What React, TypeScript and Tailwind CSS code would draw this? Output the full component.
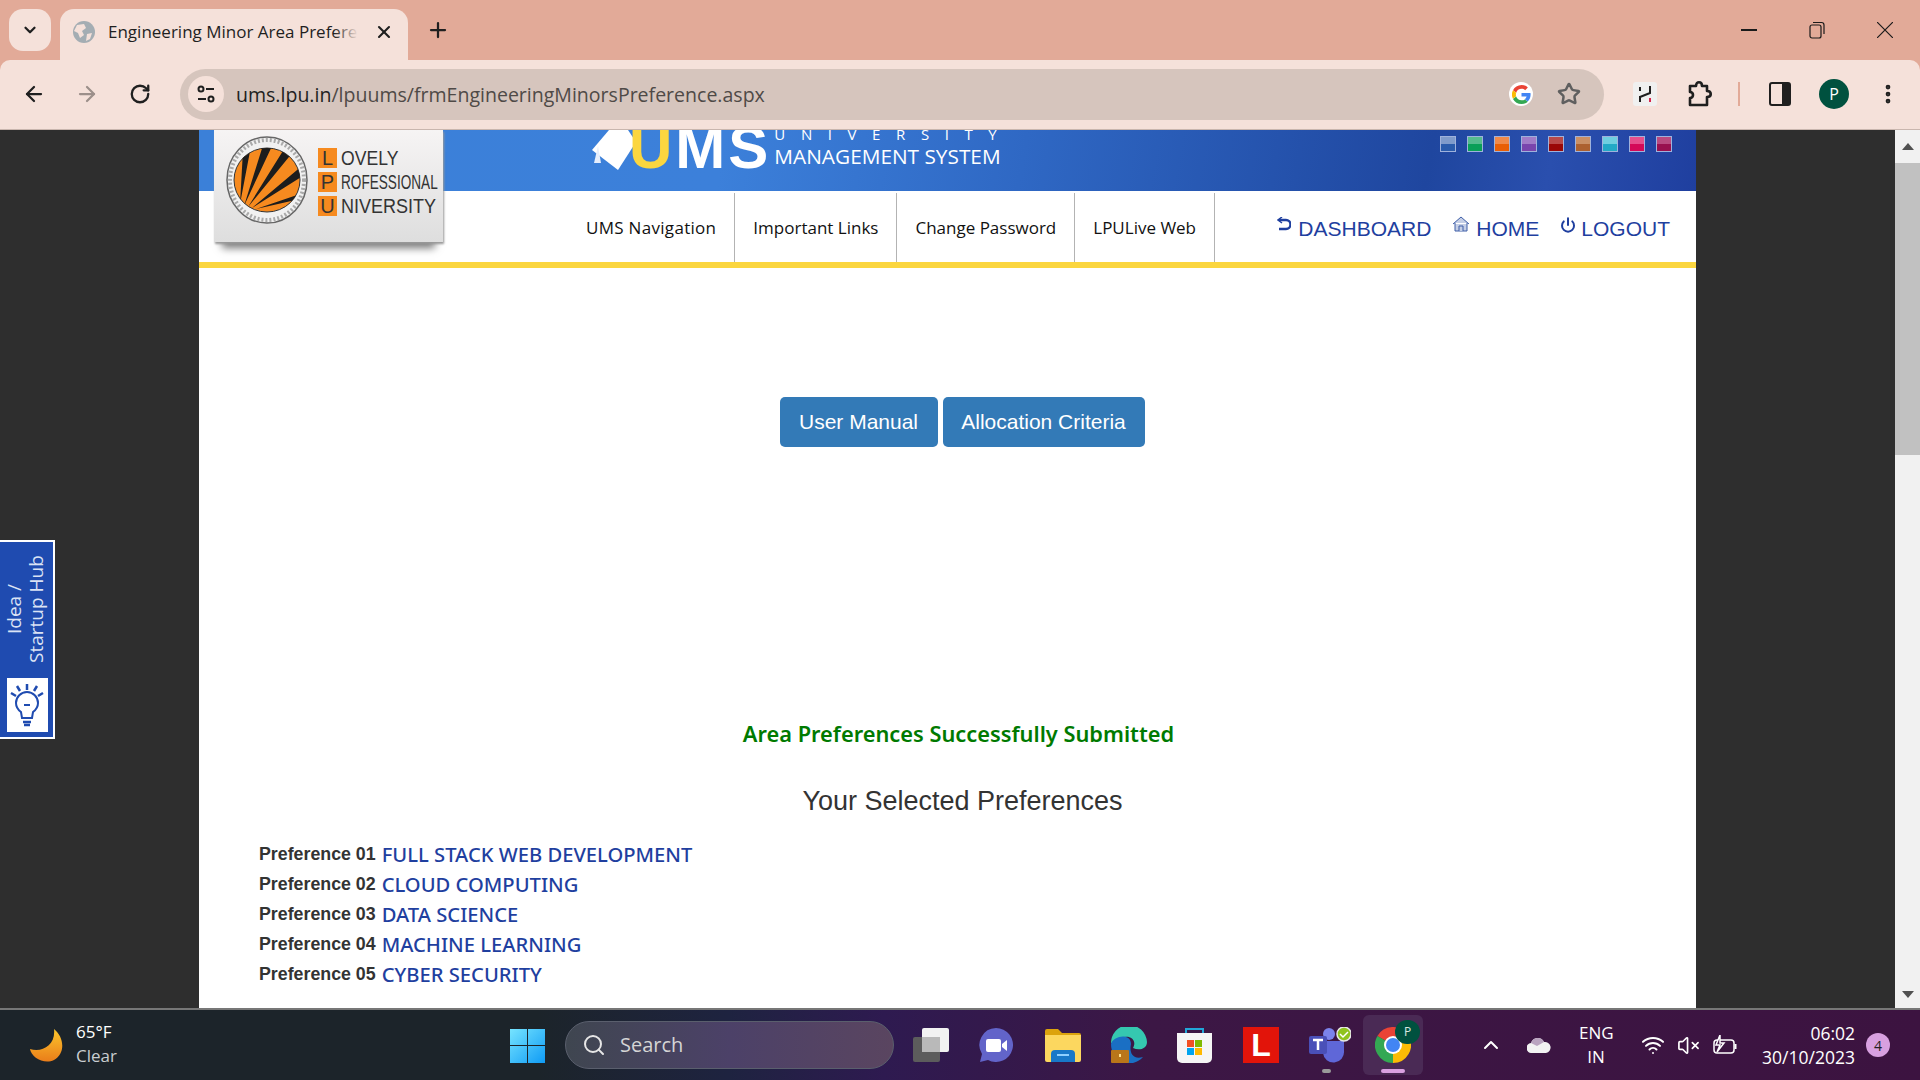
import React, { FC } from "react";
import {
  ArrowLeft,
  ArrowRight,
  ChevronDown,
  ChevronUp,
  EllipsisVertical,
  Plus,
  Power,
  RotateCw,
  Search,
  Star,
  VolumeX,
  Wifi,
  X,
} from "lucide-react";

const swatches = [
  "from-[#7f9bcb] to-[#2a5bab]",
  "from-[#55bb8e] to-[#0a9f58]",
  "from-[#f08a4a] to-[#e95f06]",
  "from-[#a27cc8] to-[#7a45ad]",
  "from-[#b84a4a] to-[#9a0808]",
  "from-[#c99066] to-[#ac6130]",
  "from-[#6fcfe0] to-[#22a9c6]",
  "from-[#e64f8c] to-[#d40a58]",
  "from-[#b84a80] to-[#98104f]",
];

const prefs = [
  ["Preference 01", "FULL STACK WEB DEVELOPMENT"],
  ["Preference 02", "CLOUD COMPUTING"],
  ["Preference 03", "DATA SCIENCE"],
  ["Preference 04", "MACHINE LEARNING"],
  ["Preference 05", "CYBER SECURITY"],
];

const navItems = [
  ["UMS Navigation", "tracking-[0.3px]"],
  ["Important Links", ""],
  ["Change Password", ""],
  ["LPULive Web", ""],
];

const Emblem: FC = () => (
  <svg width="82" height="88" viewBox="0 0 82 88" className="shrink-0">
    <defs>
      <clipPath id="disc">
        <ellipse cx="41" cy="44" rx="33" ry="32" />
      </clipPath>
    </defs>
    <ellipse cx="41" cy="44" rx="40" ry="43" fill="#f1f1f1" stroke="#666" strokeWidth="1.5" />
    <ellipse cx="41" cy="44" rx="37" ry="40" fill="none" stroke="#aaa" strokeWidth="4" strokeDasharray="2 2" />
    <ellipse cx="41" cy="44" rx="33" ry="32" fill="#f68a1f" stroke="#333" strokeWidth="1" />
    <g clipPath="url(#disc)">
      <path d="M14 68 L17 14 L25 10 Z M18 70 L38 6 L47 8 Z M22 71 L60 10 L67 16 Z M26 72 L78 28 L80 38 Z M30 73 L80 56 L78 62 Z" fill="#1d1d1d" />
    </g>
  </svg>
);

const Logo: FC = () => (
  <div className="absolute left-[15px] top-0 z-10 flex h-[112px] w-[229px] items-start bg-gradient-to-b from-[#f6f4f4] to-[#dedede] pl-[12px] pt-[6px] shadow-[1px_2px_2px_#999,0_14px_8px_-8px_#777]">
    <Emblem />
    <div className="ml-[10px] mt-[12px] flex flex-col gap-[4px] font-['Liberation_Sans',sans-serif] text-[20px] leading-[20px] text-[#333]">
      {[
        ["L", "OVELY", "scale-x-[0.88]"],
        ["P", "ROFESSIONAL", "scale-x-[0.68]"],
        ["U", "NIVERSITY", "scale-x-[0.9]"],
      ].map(([a, b, c]) => (
        <div key={a} className="flex">
          <span className="flex h-[20px] w-[19px] shrink-0 items-center justify-center bg-[#f68a1f]">{a}</span>
          <span className={`ml-[4px] origin-left whitespace-nowrap ${c}`}>{b}</span>
        </div>
      ))}
    </div>
  </div>
);

const UmsMark: FC = () => (
  <div className="absolute left-[393px] top-0 flex h-[61px] items-start overflow-hidden">
    <svg width="45" height="40" viewBox="0 0 45 40" className="mt-0 shrink-0">
      <path d="M17 0 L0 20 L26 40 L44 12 L36 0 Z" fill="#fff" />
      <path d="M6 16 L2 33 L9 33 Z" fill="#e6eefc" />
    </svg>
    <div className="-mt-[16px] ml-[-8px] flex font-['Liberation_Sans',sans-serif] text-[60px] font-bold leading-[68px] tracking-[3px]">
      <span className="text-[#fbd63f]">U</span>
      <span className="text-white">MS</span>
    </div>
    <div className="ml-[3px] font-['Open_Sans',sans-serif] text-white">
      <div className="-mt-[3px] text-[15px] leading-[15px] tracking-[15.6px]">UNIVERSITY</div>
      <div className="mt-[4px] whitespace-nowrap text-[20.8px] leading-[20px]">MANAGEMENT SYSTEM</div>
    </div>
  </div>
);

const GoogleG: FC = () => (
  <div className="flex h-[24px] w-[24px] items-center justify-center rounded-full bg-white">
    <svg width="19" height="19" viewBox="0 0 48 48">
      <path fill="#EA4335" d="M24 9.5c3.5 0 6.7 1.2 9.2 3.6l6.9-6.9C35.9 2.4 30.5 0 24 0 14.6 0 6.5 5.4 2.6 13.2l8 6.2C12.4 13.7 17.7 9.5 24 9.5z" />
      <path fill="#4285F4" d="M47 24.5c0-1.6-.1-3.1-.4-4.5H24v9h12.9c-.6 3-2.2 5.5-4.7 7.2l7.3 5.7C43.7 37.8 47 31.7 47 24.5z" />
      <path fill="#FBBC05" d="M10.5 28.6A14.5 14.5 0 0 1 10.5 19.4l-8-6.2a24 24 0 0 0 0 21.6l8-6.2z" />
      <path fill="#34A853" d="M24 48c6.5 0 11.9-2.1 15.9-5.8l-7.3-5.7c-2.2 1.5-5 2.3-8.6 2.3-6.3 0-11.6-4.2-13.5-9.9l-8 6.2C6.5 42.6 14.6 48 24 48z" />
    </svg>
  </div>
);

const ChromeTop: FC = () => (
  <div className="flex h-[60px] items-start bg-[#e2aa98]">
    <div className="ml-[9px] mt-[9px] flex h-[42px] w-[42px] items-center justify-center rounded-[14px] bg-[#f5e1da]">
      <ChevronDown size={18} strokeWidth={3} className="text-[#1f1f1f]" />
    </div>
    <div className="ml-[9px] mt-[9px] flex h-[51px] w-[348px] items-center rounded-t-[14px] bg-[#f5e1da] pb-[6px] pl-[13px]">
      <svg width="22" height="22" viewBox="0 0 22 22" className="shrink-0">
        <circle cx="11" cy="11" r="11" fill="#a4adb3" />
        <path d="M4 4 L11 3 L13 7 L9 10 L11 14 L7 17 L5 12 L1 10 Z M14 13 L19 12 L17 18 L13 20 Z" fill="#f5e1da" />
      </svg>
      <div className="relative ml-[13px] w-[250px] overflow-hidden whitespace-nowrap font-['Open_Sans',sans-serif] text-[17px] text-[#1f1f1f]">
        Engineering Minor Area Preferences
        <div className="absolute inset-y-0 right-0 w-[24px] bg-gradient-to-r from-transparent to-[#f5e1da]" />
      </div>
      <X size={20} strokeWidth={2.5} className="ml-[16px] shrink-0 text-[#1f1f1f]" />
    </div>
    <Plus size={24} strokeWidth={2.25} className="ml-[18px] mt-[18px] text-[#1f1f1f]" />
    <div className="ml-auto mr-[27px] mt-[19px] flex h-[22px] items-center">
      <div className="h-[1.5px] w-[16px] bg-[#1a1a1a]" />
      <svg width="16" height="18" viewBox="0 0 16 18" fill="none" stroke="#1a1a1a" strokeWidth="1.2" className="ml-[52px]">
        <rect x="1" y="4" width="11" height="13" rx="2" />
        <path d="M4 1.5 H12.5 A2.5 2.5 0 0 1 15 4 V13" />
      </svg>
      <svg width="16" height="16" viewBox="0 0 16 16" stroke="#1a1a1a" strokeWidth="1.2" className="ml-[52px]">
        <path d="M0 0 L16 16 M16 0 L0 16" />
      </svg>
    </div>
  </div>
);

const ChromeBar: FC = () => (
  <div className="flex h-[70px] items-center border-b border-[#c9b6ae] bg-[#e2aa98]">
    <div className="flex h-full w-full items-center rounded-t-[10px] bg-[#f5e1da] pb-[1px]">
      <ArrowLeft size={24} strokeWidth={2.25} className="ml-[22px] text-[#1f1f1f]" />
      <ArrowRight size={24} strokeWidth={2.25} className="ml-[29px] text-[#9c8f8a]" />
      <RotateCw size={22} strokeWidth={2.5} className="ml-[30px] text-[#1f1f1f]" />
      <div className="ml-[29px] flex h-[51px] w-[1424px] shrink-0 items-center rounded-full bg-[#d6c5bd] pl-[8px]">
        <div className="flex h-[36px] w-[36px] items-center justify-center rounded-full bg-[#f5e1da]">
          <svg width="20" height="20" viewBox="0 0 20 20" fill="none" stroke="#1f1f1f" strokeWidth="2">
            <circle cx="5" cy="5" r="2.5" />
            <path d="M10 5 H18 M2 15 H10" />
            <circle cx="15" cy="15" r="2.5" />
          </svg>
        </div>
        <div className="ml-[12px] mt-[1px] whitespace-nowrap font-['Open_Sans',sans-serif] text-[19.55px] text-[#4f4a47]">
          <span className="text-[#1f1f1f]">ums.lpu.in</span>/lpuums/frmEngineeringMinorsPreference.aspx
        </div>
        <div className="ml-auto flex items-center">
          <GoogleG />
          <Star size={24} strokeWidth={2.5} className="ml-[24px] text-[#5f5f5f]" />
          <div className="w-[23px]" />
        </div>
      </div>
      <div className="ml-[29px] flex h-[24px] w-[24px] items-center justify-center rounded-[3px] bg-[#f0f0f0]">
        <svg width="18" height="20" viewBox="0 0 18 20" fill="none" stroke="#1f1f1f" strokeWidth="2">
          <path d="M4 3 V7 M4 12 V18 M14 2 V9 L4 13" />
          <path d="M14 14 V18" stroke="#d6264f" />
        </svg>
      </div>
      <svg width="26" height="28" viewBox="0 0 26 28" fill="none" stroke="#1f1f1f" strokeWidth="2.6" className="ml-[30px]">
        <path d="M3 6 H9 C9 1 15 1 15 6 H20 V11 C25 11 25 17 20 17 V25 H3 V18 C7 18 7 12 3 12 Z" strokeLinejoin="round" />
      </svg>
      <div className="ml-[25px] h-[24px] w-[2px] bg-[#e2aa98]" />
      <div className="ml-[29px] flex h-[24px] w-[22px] justify-end rounded-[3px] border-[2px] border-[#1f1f1f]">
        <div className="h-full w-[7px] bg-[#1f1f1f]" />
      </div>
      <div className="ml-[28px] flex h-[30px] w-[30px] items-center justify-center rounded-full bg-[#00513f] font-['Open_Sans',sans-serif] text-[16px] text-white">
        P
      </div>
      <EllipsisVertical size={24} strokeWidth={2.75} className="ml-[27px] text-[#1f1f1f]" />
    </div>
  </div>
);

const IdeaHub: FC = () => (
  <div className="absolute left-0 top-[410px] z-10 flex h-[199px] w-[55px] flex-col items-center border-y-[2px] border-r-[2px] border-white bg-[#1f4bb0] pt-[12px]">
    <div className="mr-[3px] flex h-[110px] rotate-180 flex-col items-center justify-center text-center font-['Open_Sans',sans-serif] text-[19px] leading-[22px] text-[#dbe3f5] [writing-mode:vertical-rl]">
      <span>Idea /</span>
      <span className="whitespace-nowrap">Startup Hub</span>
    </div>
    <div className="ml-[1px] mt-[14px] flex h-[54px] w-[41px] shrink-0 items-center justify-center bg-white">
      <svg width="34" height="46" viewBox="0 0 34 46" fill="none" stroke="#1f4bb0" strokeWidth="2">
        <path d="M11 30 C7 27 6 24 6 21 A11 11 0 0 1 28 21 C28 24 27 27 23 30 L22 36 H12 Z" />
        <path d="M13 40 H21 M14 43 H20 M17 2 V8 M7 4 L10 9 M27 4 L24 9 M1 11 L6 14 M33 11 L28 14" strokeWidth="2.5" />
        <path d="M14 23 H20" />
      </svg>
    </div>
  </div>
);

const SiteHeader: FC = () => (
  <>
    <div className="relative h-[61px] overflow-hidden bg-[linear-gradient(100deg,#3b80d8_0%,#3c80da_35%,#2f68c4_55%,#1f469f_82%,#2a4fae_90%,#1f3f9f_100%)]">
      <UmsMark />
      <div className="absolute right-[24px] top-[6px] flex gap-[11px]">
        {swatches.map((s) => (
          <div key={s} className={`h-[16px] w-[16px] border border-[#9fb2dc] bg-gradient-to-b from-50% to-50% ${s}`} />
        ))}
      </div>
    </div>
    <div className="flex h-[77px] border-b-[6px] border-[#fbd63f] pl-[369px] pr-[26px]">
      {navItems.map(([n, extra]) => (
        <div
          key={n}
          className={`mt-[2px] flex items-center whitespace-nowrap border-r border-[#b3b3b3] px-[18px] font-['Open_Sans',sans-serif] text-[17px] text-[#111] ${extra}`}
        >
          {n}
        </div>
      ))}
      <div className="ml-auto flex items-center pt-[4px] font-['Liberation_Sans',sans-serif] text-[21px] text-[#1f3f9f]">
        <svg width="14" height="16" viewBox="0 0 14 16" fill="none" stroke="#1f3f9f" strokeWidth="2.5" className="-mt-[8px]">
          <path d="M2 3 H9 A4.5 4.5 0 0 1 9 12 H2" />
          <path d="M5 0 L1 3 L5 6" strokeWidth="1.5" />
        </svg>
        <span className="ml-[7px]">DASHBOARD</span>
        <svg width="18" height="17" viewBox="0 0 18 17" fill="#c5cfe6" stroke="#3f5fa8" strokeWidth="1" className="-mt-[8px] ml-[21px]">
          <path d="M1 8 L9 1 L17 8 M3 7 V15 H15 V7" />
          <path d="M7 15 V10 H11 V15" />
        </svg>
        <span className="ml-[6px]">HOME</span>
        <Power size={16} strokeWidth={3} className="-mt-[8px] ml-[21px] text-[#1f3f9f]" />
        <span className="ml-[5px]">LOGOUT</span>
      </div>
    </div>
  </>
);

const Panel: FC = () => (
  <div className="relative h-full w-[1497px] shrink-0 overflow-hidden bg-white">
    <Logo />
    <SiteHeader />
    <div className="mt-[129px] flex justify-center gap-[5px] pl-[29px]">
      <button className="flex h-[50px] w-[158px] items-center justify-center rounded-[5px] bg-[#337ab7] font-['Liberation_Sans',sans-serif] text-[21px] text-white">
        User Manual
      </button>
      <button className="flex h-[50px] w-[202px] items-center justify-center rounded-[5px] bg-[#337ab7] font-['Liberation_Sans',sans-serif] text-[21px] text-white">
        Allocation Criteria
      </button>
    </div>
    <div className="mt-[272px] pl-[22px] text-center font-['Noto_Sans',sans-serif] text-[21.8px] font-semibold leading-[30px] text-[#007a00]">
      Area Preferences Successfully Submitted
    </div>
    <div className="mt-[37px] pl-[30px] text-center font-['Liberation_Sans',sans-serif] text-[27px] leading-[30px] text-[#333]">
      Your Selected Preferences
    </div>
    <div className="mt-[23px] flex flex-col pl-[60px]">
      {prefs.map(([label, value]) => (
        <div key={label} className="flex h-[30px] items-center">
          <span className="font-['Liberation_Sans',sans-serif] text-[17.8px] font-bold text-[#333]">{label}</span>
          <span className="ml-[6px] font-['Noto_Sans',sans-serif] text-[20.2px] font-medium text-[#1f3f9f]">{value}</span>
        </div>
      ))}
    </div>
  </div>
);

const Scrollbar: FC = () => (
  <div className="flex h-full w-[25px] shrink-0 flex-col items-center bg-[#f1f1f1]">
    <div className="flex h-[33px] w-full items-center justify-center">
      <div className="h-0 w-0 border-x-[6px] border-b-[7px] border-x-transparent border-b-[#505050]" />
    </div>
    <div className="h-[292px] w-full bg-[#c1c1c1]" />
    <div className="flex-1" />
    <div className="flex h-[28px] w-full items-center justify-center">
      <div className="h-0 w-0 border-x-[6px] border-t-[7px] border-x-transparent border-t-[#505050]" />
    </div>
  </div>
);

const Taskbar: FC = () => (
  <div className="flex h-[70px] shrink-0 items-center bg-[linear-gradient(90deg,#1c242a_0%,#1c242a_28%,#1e2340_38%,#2e1a50_46%,#3c1745_60%,#3c1340_100%)] px-[30px] text-white">
    <svg width="34" height="33" viewBox="0 0 34 33" className="shrink-0">
      <defs>
        <linearGradient id="moon" x1="0" y1="0" x2="0" y2="1">
          <stop offset="0" stopColor="#fcc72c" />
          <stop offset="1" stopColor="#ea7d1a" />
        </linearGradient>
      </defs>
      <path d="M24 0 C34 8 36 24 24 31 C14 36 1 28 0 20 C12 24 26 16 24 0 Z" fill="url(#moon)" />
    </svg>
    <div className="-mt-[2px] ml-[12px] w-[60px] font-['Open_Sans',sans-serif] text-[17px] leading-[24px]">
      <div>65°F</div>
      <div className="text-[#c9cdd0]">Clear</div>
    </div>
    <svg width="35" height="35" viewBox="0 0 35 35" className="ml-[374px] shrink-0">
      <defs>
        <linearGradient id="win" x1="0" y1="0" x2="1" y2="1">
          <stop offset="0" stopColor="#76e4ff" />
          <stop offset="1" stopColor="#0f9bf5" />
        </linearGradient>
      </defs>
      <path d="M0 1 H17 V17 H0 Z M18 1 H35 V17 H18 Z M0 18 H17 V35 H0 Z M18 18 H35 V35 H18 Z" fill="url(#win)" />
    </svg>
    <div className="ml-[20px] flex h-[48px] w-[329px] shrink-0 items-center rounded-full border border-[#5a5f6d] bg-[linear-gradient(90deg,#3f4650,#4c4168,#5a4560)] pl-[16px]">
      <Search size={24} strokeWidth={2} className="text-[#e6e6e6]" />
      <span className="ml-[14px] font-['Open_Sans',sans-serif] text-[20px] text-[#d5d5d5]">Search</span>
    </div>
    <svg width="36" height="34" viewBox="0 0 36 34" className="ml-[19px] shrink-0">
      <rect x="0" y="9" width="27" height="25" rx="2" fill="#5c5c5c" />
      <rect x="9" y="0" width="27" height="24" rx="2" fill="#f2f2f2" />
      <rect x="9" y="9" width="18" height="15" fill="#b9b9b9" />
    </svg>
    <svg width="34" height="34" viewBox="0 0 34 34" className="ml-[30px] shrink-0">
      <path d="M17 0 A17 17 0 1 1 9 32 L1 34 L3 26 A17 17 0 0 1 17 0 Z" fill="#6264c9" />
      <rect x="7" y="11" width="15" height="13" rx="2" fill="#fff" />
      <path d="M23 16 L28 12 V23 L23 19 Z" fill="#fff" />
    </svg>
    <svg width="36" height="33" viewBox="0 0 36 33" className="ml-[32px] shrink-0">
      <path d="M0 2 A2 2 0 0 1 2 0 H13 L17 4 H34 A2 2 0 0 1 36 6 V10 H0 Z" fill="#dca30d" />
      <path d="M0 6 H36 V31 A2 2 0 0 1 34 33 H2 A2 2 0 0 1 0 31 Z" fill="#fcd75f" />
      <path d="M6 33 V25 A4 4 0 0 1 10 21 H26 A4 4 0 0 1 30 25 V33 Z" fill="#1878c8" />
      <rect x="12" y="25" width="12" height="2" fill="#8fd0ff" />
    </svg>
    <svg width="36" height="36" viewBox="0 0 36 36" className="ml-[30px] shrink-0">
      <path d="M0 17 A18 18 0 0 1 36 15 C36 22 28 24 22 21 C26 14 20 9 14 10 C7 11 1 14 0 17 Z" fill="#35c8b0" />
      <path d="M0 17 C3 8 20 6 20 17 C18 26 22 33 32 30 A18 18 0 0 1 12 35 C4 31 0 25 0 17 Z" fill="#1a6fc4" />
      <rect x="0" y="23" width="18" height="13" rx="1" fill="#b9761a" />
      <rect x="8" y="27" width="2" height="3" fill="#ffe08a" />
    </svg>
    <svg width="35" height="35" viewBox="0 0 35 35" className="ml-[30px] shrink-0">
      <path d="M9 8 V1 H26 V8" fill="none" stroke="#22a7d8" strokeWidth="2" />
      <path d="M0 5 H35 V30 A5 5 0 0 1 30 35 H5 A5 5 0 0 1 0 30 Z" fill="#f5f5f5" />
      <rect x="10" y="12" width="7" height="7" fill="#f25022" />
      <rect x="18" y="12" width="7" height="7" fill="#7fba00" />
      <rect x="10" y="20" width="7" height="7" fill="#00a4ef" />
      <rect x="18" y="20" width="7" height="7" fill="#ffb900" />
    </svg>
    <div className="ml-[31px] flex h-[36px] w-[36px] shrink-0 items-center justify-center bg-[#e2140a] font-['Liberation_Sans',sans-serif] text-[32px] font-bold text-white">
      L
    </div>
    <div className="relative ml-[30px] h-[36px] w-[42px] shrink-0">
      <svg width="42" height="36" viewBox="0 0 42 36">
        <circle cx="20" cy="7" r="6" fill="#7b83eb" />
        <path d="M14 14 H35 V24 A10 10 0 0 1 14 26 Z" fill="#5f67d8" />
        <rect x="0" y="9" width="18" height="18" rx="2" fill="#4a50b8" />
        <path d="M4 13 H14 M9 13 V23" stroke="#fff" strokeWidth="2.5" />
        <circle cx="35" cy="7" r="7" fill="#8fc31f" stroke="#e8e8e8" strokeWidth="1.5" />
        <path d="M31 7 L34 10 L39 5" stroke="#fff" strokeWidth="1.5" fill="none" />
      </svg>
      <div className="absolute left-[13px] top-[42px] h-[4px] w-[9px] rounded-full bg-[#9a9a9a]" />
    </div>
    <div className="relative ml-[12px] h-[60px] w-[60px] shrink-0 rounded-[6px] bg-[#4a2a55]">
      <svg width="36" height="36" viewBox="0 0 36 36" className="absolute left-[12px] top-[12px]">
        <path d="M18 18 L2.4 9 A18 18 0 0 1 33.6 9 Z" fill="#ea4335" />
        <path d="M18 18 L33.6 9 A18 18 0 0 1 18 36 Z" fill="#fbbc05" />
        <path d="M18 18 L18 36 A18 18 0 0 1 2.4 9 Z" fill="#34a853" />
        <circle cx="18" cy="18" r="9" fill="#fff" />
        <circle cx="18" cy="18" r="7" fill="#4285f4" />
      </svg>
      <div className="absolute left-[32px] top-[5px] flex h-[24px] w-[25px] items-center justify-center rounded-full bg-[#00513f] font-['Open_Sans',sans-serif] text-[12px] text-[#d9e8e2]">
        P
      </div>
      <div className="absolute left-[18px] top-[54px] h-[4px] w-[24px] rounded-full bg-[#d9a0e0]" />
    </div>
    <ChevronUp size={24} strokeWidth={2} className="ml-[56px] shrink-0" />
    <svg width="24" height="16" viewBox="0 0 24 16" className="ml-[24px] shrink-0">
      <path d="M5 16 A5 5 0 0 1 4 6 A7 7 0 0 1 17 5 A5.5 5.5 0 0 1 19 16 Z" fill="#f2f2f2" />
      <path d="M4 6 A7 7 0 0 1 17 5 L10 9 Z" fill="#b9a3bf" />
    </svg>
    <div className="ml-[28px] w-[34px] text-center font-['Open_Sans',sans-serif] text-[17px] leading-[24px]">
      <div>ENG</div>
      <div>IN</div>
    </div>
    <Wifi size={24} strokeWidth={2} className="ml-[28px] shrink-0" />
    <VolumeX size={23} strokeWidth={1.75} className="ml-[12px] shrink-0" />
    <svg width="24" height="20" viewBox="0 0 24 20" fill="none" stroke="#fff" strokeWidth="1.5" className="ml-[13px] shrink-0">
      <rect x="1" y="5" width="20" height="13" rx="3" />
      <path d="M22.5 9 V14" strokeWidth="2" />
      <path d="M7 0 L3 10 H7 L4 17 L11 8 H7 Z" fill="#3c1340" />
    </svg>
    <div className="-mt-[1px] ml-auto text-right font-['Open_Sans',sans-serif] text-[17.5px] leading-[24px]">
      <div>06:02</div>
      <div>30/10/2023</div>
    </div>
    <div className="ml-[11px] flex h-[24px] w-[24px] shrink-0 items-center justify-center rounded-full bg-[#d8a0e0] font-['Open_Sans',sans-serif] text-[14px] text-[#222]">
      4
    </div>
  </div>
);

export default function App() {
  return (
    <div className="flex h-[1080px] w-[1920px] flex-col overflow-hidden bg-[#2e2e2e]">
      <ChromeTop />
      <ChromeBar />
      <div className="relative flex min-h-0 flex-1 border-b-[2px] border-[#777]">
        <IdeaHub />
        <div className="flex h-full flex-1 justify-start pl-[199px]">
          <Panel />
        </div>
        <Scrollbar />
      </div>
      <Taskbar />
    </div>
  );
}
